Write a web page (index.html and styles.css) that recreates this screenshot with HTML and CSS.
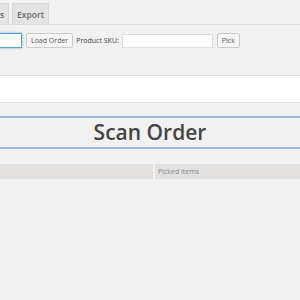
FILE: index.html
```html
<!DOCTYPE html>
<html lang="en">
<head>
    <meta charset="UTF-8">
    <title>Scan Order</title>
    <link rel="stylesheet" href="styles.css">
</head>
<body>
    <div class="tabs">
        <a class="tab tab-cut">Items</a>
        <a class="tab">Export</a>
    </div>

    <div class="toolbar">
        <input type="text" class="order-input" value="">
        <button class="btn">Load Order</button>
        <label class="label">Product SKU:</label>
        <input type="text" class="sku-input">
        <button class="btn">Pick</button>
    </div>

    <div class="notice"></div>

    <h1 class="scan-title">Scan Order</h1>

    <div class="items">
        <div class="col"></div>
        <div class="col">Picked items</div>
    </div>
    <div class="items-sep"></div>
</body>
</html>
```

FILE: styles.css
```css
body {
    margin: 0;
    background-color: #f1f1f1;
    font-family: "Open Sans", Arial, sans-serif;
    color: #444;
    overflow: hidden;
}
.tabs {
    display: flex;
    gap: 3px;
    height: 24px;
    border-bottom: 1px solid #dcdcdc;
    align-items: flex-end;
}
.tab {
    height: 21px;
    box-sizing: border-box;
    padding: 0 4px;
    background-color: #e4e4e4;
    border: 1px solid #d8d8d8;
    border-bottom: none;
    font-size: 8.5px;
    font-weight: 600;
    color: #6a6a6a;
    line-height: 21px;
}
.tab-cut {
    margin-left: -24px;
}
.toolbar {
    display: flex;
    align-items: center;
    gap: 3px;
    padding: 8px 0 0 0;
    height: 15px;
}
.order-input {
    width: 27px;
    height: 15px;
    margin-left: -5px;
    margin-right: 1px;
    box-sizing: border-box;
    border: 1px solid #5b9dd9;
    box-shadow: 0 0 2px rgba(30, 140, 190, 0.6);
    background: #fff;
}
.sku-input {
    width: 91px;
    height: 14px;
    box-sizing: border-box;
    border: 1px solid #ddd;
    background: #fff;
    margin-right: 1px;
}
.btn {
    height: 15px;
    padding: 0 4px;
    font-family: "Open Sans", Arial, sans-serif;
    font-size: 7px;
    color: #555;
    background: #f7f7f7;
    border: 1px solid #ccc;
    border-radius: 2px;
}
.label {
    font-size: 7px;
    color: #444;
}
.notice {
    margin-top: 27px;
    height: 26px;
    background: #fff;
    border-top: 1px solid #ddd;
    border-bottom: 1px solid #ddd;
}
.scan-title {
    margin: 13px 0 0 0;
    height: 29px;
    border-top: 2px solid #a3b6e4;
    border-bottom: 2px solid #a3b6e4;
    text-align: center;
    font-size: 21px;
    font-weight: 600;
    line-height: 29px;
    color: #444;
}
.items {
    display: grid;
    grid-template-columns: 153px 1fr;
    gap: 2px;
    margin-top: 15px;
    height: 15px;
}
.col {
    background: #e2e1e0;
    font-size: 7px;
    color: #888;
    line-height: 15px;
    padding-left: 3px;
}
.items-sep {
    margin-top: 3px;
    height: 1px;
    background: #f5f3ef;
}
```
